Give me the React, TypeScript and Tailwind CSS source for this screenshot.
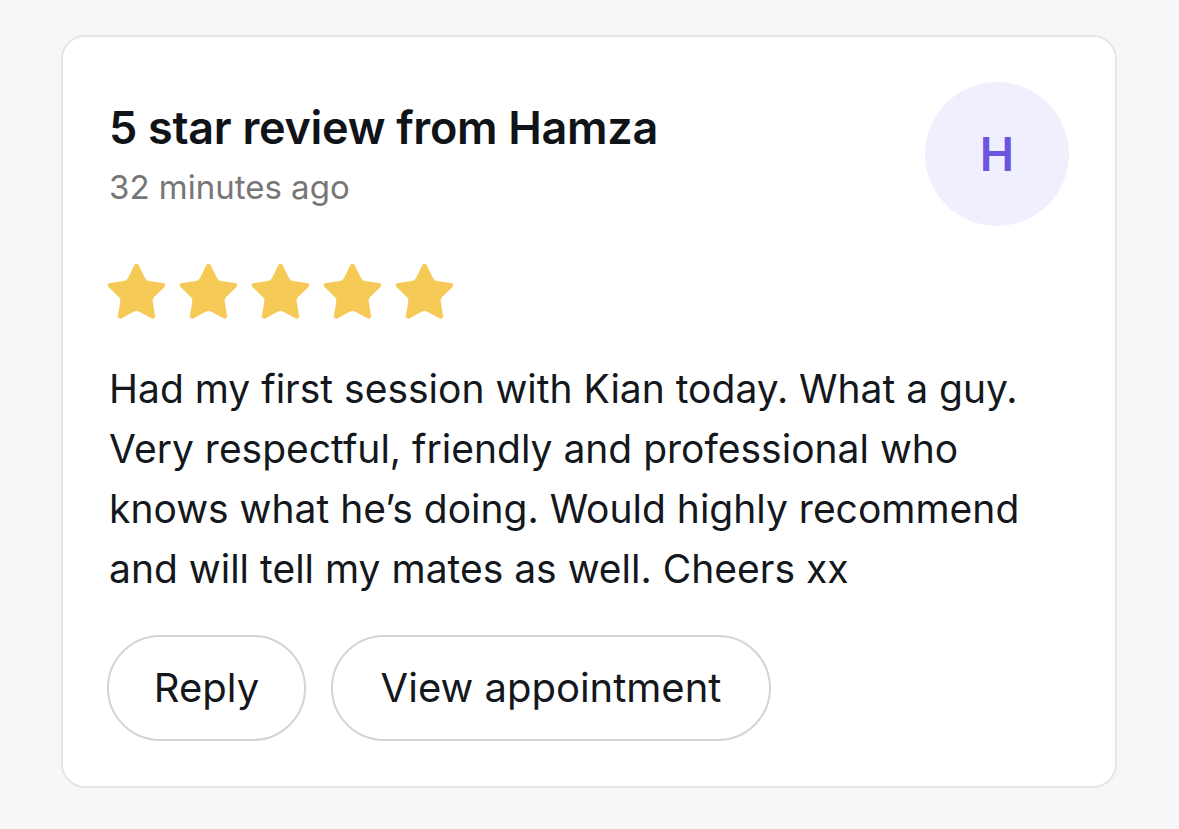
import React from "react";

const Star = () => (
  <svg width="67" height="67" viewBox="0 0 24 24" className="shrink-0">
    <path
      d="M11.525 2.295a.53.53 0 0 1 .95 0l2.31 4.679a2.123 2.123 0 0 0 1.595 1.16l5.166.756a.53.53 0 0 1 .294.904l-3.736 3.638a2.123 2.123 0 0 0-.611 1.878l.882 5.14a.53.53 0 0 1-.771.56l-4.618-2.428a2.122 2.122 0 0 0-1.973 0L6.396 21.01a.53.53 0 0 1-.77-.56l.881-5.139a2.122 2.122 0 0 0-.611-1.879L2.16 9.795a.53.53 0 0 1 .294-.906l5.165-.755a2.122 2.122 0 0 0 1.597-1.16z"
      fill="#f6ca56"
      stroke="#f6ca56"
      strokeWidth="0.6"
      strokeLinejoin="round"
    />
  </svg>
);

export default function App() {
  return (
    <div
      className="min-h-[829px] w-full bg-[#f7f7f9] pt-[35px] pl-[61px] pr-[62px]"
      style={{ fontFamily: "Inter, 'Noto Sans', sans-serif" }}
    >
      <div className="w-[1056px] h-[753px] rounded-[24px] border-2 border-[#e6e6e8] bg-white px-[46px] pt-[45px]">
        <div className="flex justify-between items-start">
          <div className="pt-[19px]">
            <div className="text-[45px] leading-[54px] font-semibold text-[#101418] tracking-[-0.3px]">
              5 star review from Hamza
            </div>
            <div className="mt-[12px] text-[33px] leading-[40px] text-[#767676]">
              32 minutes ago
            </div>
          </div>
          <div className="w-[144px] h-[144px] rounded-full bg-[#f0effd] flex items-center justify-center text-[46px] font-semibold text-[#6b55e0]">
            H
          </div>
        </div>
        <div className="mt-[33px] flex gap-[5px] -ml-[6px]">
          <Star />
          <Star />
          <Star />
          <Star />
          <Star />
        </div>
        <p className="mt-[33px] text-[39px] leading-[60px] text-[#14181c] whitespace-nowrap">
          Had my first session with Kian today. What a guy.
          <br />
          Very respectful, friendly and professional who
          <br />
          knows what he’s doing. Would highly recommend
          <br />
          and will tell my mates as well. Cheers xx
        </p>
        <div className="mt-[36px] flex gap-[25px] -ml-[2px]">
          <button className="h-[106px] w-[199px] rounded-full border-2 border-[#d4d4d4] text-[40px] font-normal text-[#14181c] bg-white">
            Reply
          </button>
          <button className="h-[106px] w-[440px] rounded-full border-2 border-[#d4d4d4] text-[40px] font-normal text-[#14181c] bg-white">
            View appointment
          </button>
        </div>
      </div>
    </div>
  );
}
